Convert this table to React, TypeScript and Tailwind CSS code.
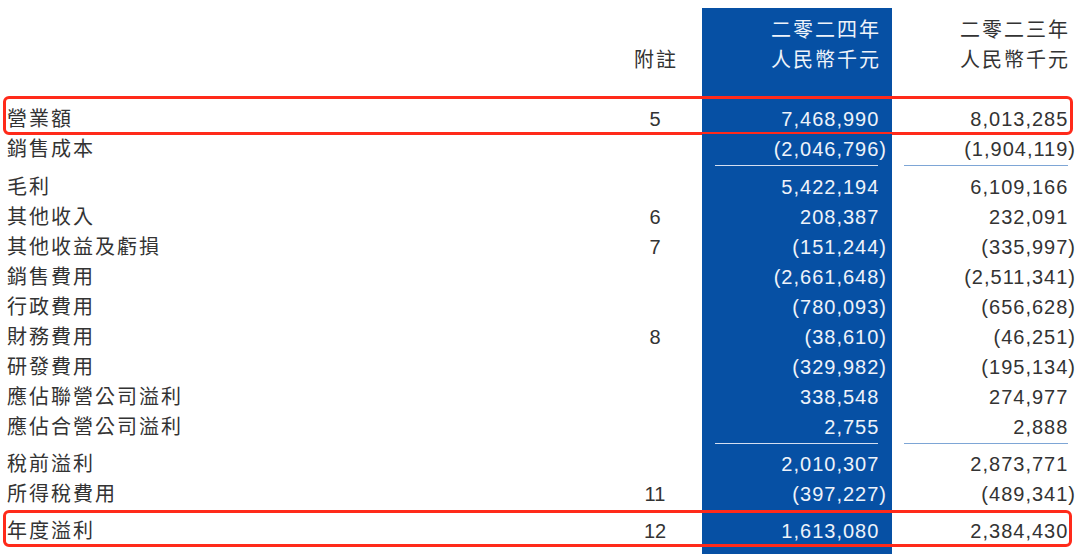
import React from "react";

type Row = {
  label: string;
  note?: string;
  a: string;
  b: string;
  box?: "first" | "last";
};

const FONT = { fontFamily: "'Liberation Sans', 'Noto Sans CJK TC', sans-serif" };

function Num({ v }: { v: string }) {
  const neg = v.startsWith("(");
  const core = neg ? v.slice(0, -1) : v;
  return (
    <span className="tracking-[1px]">
      {core}
      <span className={neg ? "" : "invisible"}>)</span>
    </span>
  );
}

function DataRow({ r, mt }: { r: Row; mt?: string }) {
  return (
    <div className="relative flex h-[30px] items-stretch">
      <div className="flex w-[620px] items-center pl-[7px] tracking-[2px] text-[20px] text-[#333]">{r.label}</div>
      <div className="flex w-[70px] items-center justify-center text-[20px] text-[#333]">{r.note ?? ""}</div>
      <div className="w-[12px]" />
      <div className="flex w-[190px] items-center justify-end bg-[#0650a4] pr-[5px] text-[20px] text-[#eef3fa]">
        <Num v={r.a} />
      </div>
      <div className="flex w-[188px] items-center justify-end pr-[4px] text-[20px] text-[#333]">
        <Num v={r.b} />
      </div>
      {r.box === "first" && (
        <div className="pointer-events-none absolute left-[3px] right-[7px] top-[-8px] bottom-[-1px] rounded-[6px] border-[3px] border-[#ff2a1a]" />
      )}
      {r.box === "last" && (
        <div className="pointer-events-none absolute left-[3px] right-[8px] top-[-6px] bottom-[-1px] rounded-[6px] border-[3px] border-[#ff2a1a]" />
      )}
    </div>
  );
}

function Spacer({ h, line }: { h: string; line?: boolean }) {
  return (
    <div className={`flex ${h}`}>
      <div className="w-[702px]" />
      <div className="w-[190px] bg-[#0650a4] pt-px">
        {line && <div className="ml-[13px] mr-[14px] h-px bg-[#d3def0]" />}
      </div>
      <div className="w-[188px] pt-px">
        {line && <div className="ml-[12px] mr-[12px] h-px bg-[#7ea6d6]" />}
      </div>
    </div>
  );
}

const g1: Row[] = [
  { label: "營業額", note: "5", a: "7,468,990", b: "8,013,285", box: "first" },
  { label: "銷售成本", a: "(2,046,796)", b: "(1,904,119)" },
];
const g2: Row[] = [
  { label: "毛利", a: "5,422,194", b: "6,109,166" },
  { label: "其他收入", note: "6", a: "208,387", b: "232,091" },
  { label: "其他收益及虧損", note: "7", a: "(151,244)", b: "(335,997)" },
  { label: "銷售費用", a: "(2,661,648)", b: "(2,511,341)" },
  { label: "行政費用", a: "(780,093)", b: "(656,628)" },
  { label: "財務費用", note: "8", a: "(38,610)", b: "(46,251)" },
  { label: "研發費用", a: "(329,982)", b: "(195,134)" },
  { label: "應佔聯營公司溢利", a: "338,548", b: "274,977" },
  { label: "應佔合營公司溢利", a: "2,755", b: "2,888" },
];
const g3: Row[] = [
  { label: "稅前溢利", a: "2,010,307", b: "2,873,771" },
  { label: "所得稅費用", note: "11", a: "(397,227)", b: "(489,341)" },
];
const last: Row = { label: "年度溢利", note: "12", a: "1,613,080", b: "2,384,430", box: "last" };

export default function App() {
  return (
    <div className="h-[554px] w-[1080px] overflow-hidden bg-white pt-[8px]" style={FONT}>
      {/* header */}
      <div className="flex">
        <div className="w-[620px]" />
        <div className="flex w-[70px] flex-col pt-[7px] text-[20px] text-[#333]">
          <div className="h-[30px]" />
          <div className="flex h-[30px] items-center justify-center tracking-[2px] pl-[2px]">附註</div>
        </div>
        <div className="w-[12px]" />
        <div className="flex w-[190px] flex-col items-end bg-[#0650a4] pt-[7px] pb-[29px] pr-[11px] text-[20px] tracking-[2px] text-[#eef3fa]">
          <div className="flex h-[30px] items-center">二零二四年</div>
          <div className="flex h-[30px] items-center">人民幣千元</div>
        </div>
        <div className="flex w-[188px] flex-col items-end pt-[7px] pr-[10px] text-[20px] tracking-[2px] text-[#333]">
          <div className="flex h-[30px] items-center">二零二三年</div>
          <div className="flex h-[30px] items-center">人民幣千元</div>
        </div>
      </div>
      {g1.map((r) => (
        <DataRow key={r.label} r={r} />
      ))}
      <Spacer h="h-[8px]" line />
      {g2.map((r) => (
        <DataRow key={r.label} r={r} />
      ))}
      <Spacer h="h-[7px]" line />
      {g3.map((r) => (
        <DataRow key={r.label} r={r} />
      ))}
      <Spacer h="h-[7px]" />
      <DataRow r={last} />
      <Spacer h="h-[20px]" />
    </div>
  );
}
